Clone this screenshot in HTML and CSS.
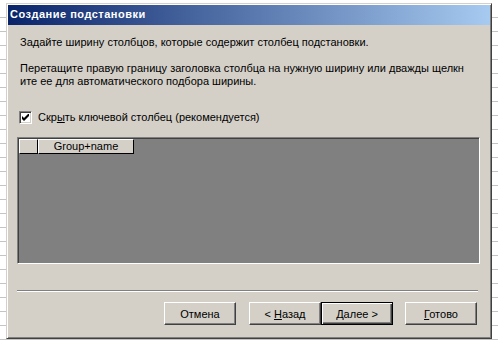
FILE: index.html
```html
<!DOCTYPE html>
<html lang="ru">
  <head>
    <meta charset="UTF-8" />
    <title>Создание подстановки</title>
    <link rel="stylesheet" href="styles.css">
  </head>
  <body>
    <div class="dialog">
      <div class="caption">Создание подстановки</div>
      <div class="dialog-body">
        <p class="note">Задайте ширину столбцов, которые содержит столбец подстановки.</p>
        <p class="note note-wide">Перетащите правую границу заголовка столбца на нужную ширину или дважды щелкн<br>ите ее для автоматического подбора ширины.</p>

        <label class="check-row">
          <span class="checkbox">
            <svg width="7" height="7" viewBox="0 0 7 7">
              <path d="M0 2v3l2 2l5-5v-3l-5 5z" fill="#000"/>
            </svg>
          </span>
          <span>Скр<u>ы</u>ть ключевой столбец (рекомендуется)</span>
        </label>

        <div class="grid">
          <div class="grid-head">
            <div class="head-cell head-sel"></div>
            <div class="head-cell head-name">Group+name</div>
          </div>
        </div>

        <div class="separator"></div>

        <div class="buttons">
          <button class="btn btn-cancel">Отмена</button>
          <button class="btn">&lt; <u>Н</u>азад</button>
          <button class="btn btn-default"><u>Д</u>алее &gt;</button>
          <button class="btn btn-finish"><u>Г</u>отово</button>
        </div>
      </div>
    </div>
  </body>
</html>
```

FILE: styles.css
```css
* {
  margin: 0;
  padding: 0;
  box-sizing: border-box;
}

body {
  font-family: "Liberation Sans", Arial, sans-serif;
  font-size: 11px;
  line-height: 13px;
  color: #000;
  background-color: #fff;
  background-image: repeating-linear-gradient(to bottom, #fff 0 13px, #c4c4c4 13px 14px);
  background-position: 0 4px;
  min-height: 100vh;
  padding: 3px 0 0 6px;
}

.dialog {
  width: 486px;
  height: 336px;
  background-color: #d4d0c8;
  border: 1px solid;
  border-color: #d4d0c8 #404040 #404040 #d4d0c8;
  box-shadow: inset 1px 1px #fff, inset -1px -1px #808080;
  padding: 1px;
  display: flex;
  flex-direction: column;
}

.caption {
  height: 20px;
  padding: 3px 0 0 2px;
  color: #fff;
  font-weight: bold;
  font-size: 11px;
  letter-spacing: 0.5px;
  background: linear-gradient(to right, #0a246a, #a6caf0);
}

.dialog-body {
  flex: 1;
  padding: 11px 10px 0 9px;
  display: flex;
  flex-direction: column;
}

.note {
  padding-left: 3px;
  white-space: nowrap;
}

.note-wide {
  margin-top: 13px;
}

.check-row {
  display: flex;
  align-items: center;
  margin-top: 23px;
  padding-left: 2px;
  height: 13px;
}

.checkbox {
  width: 13px;
  height: 13px;
  margin-right: 6px;
  background-color: #fff;
  border: 1px solid;
  border-color: #808080 #fff #fff #808080;
  box-shadow: inset 1px 1px #404040, inset -1px -1px #d4d0c8;
  display: flex;
  align-items: center;
  justify-content: center;
}

.grid {
  margin-top: 13px;
  width: 463px;
  height: 127px;
  background-color: #808080;
  border: 1px solid;
  border-color: #808080 #fff #fff #808080;
  box-shadow: inset 1px 1px #404040;
  padding: 1px 0 0 1px;
}

.grid-head {
  display: flex;
  height: 15px;
}

.head-cell {
  background-color: #d4d0c8;
  border-top: 1px solid #fff;
  border-left: 1px solid #fff;
  border-right: 1px solid #000;
  border-bottom: 1px solid #000;
  text-align: center;
  line-height: 13px;
}

.head-sel {
  width: 19px;
}

.head-name {
  width: 96px;
}

.separator {
  margin-top: 26px;
  width: 461px;
  height: 2px;
  border-top: 1px solid #808080;
  border-bottom: 1px solid #fff;
}

.buttons {
  display: flex;
  justify-content: flex-end;
  margin-top: 10px;
  padding-right: 3px;
}

.btn {
  width: 72px;
  height: 23px;
  font-family: inherit;
  font-size: 11px;
  color: #000;
  background-color: #d4d0c8;
  border: 1px solid;
  border-color: #fff #404040 #404040 #fff;
  box-shadow: inset -1px -1px #808080;
}

.btn u {
  text-decoration-thickness: 1px;
}

.btn-cancel {
  margin-right: 13px;
}

.btn-finish {
  margin-left: 12px;
}

.btn-default {
  border-color: #000;
  box-shadow: inset 1px 1px #fff, inset -1px -1px #404040, inset -2px -2px #808080;
}
```
